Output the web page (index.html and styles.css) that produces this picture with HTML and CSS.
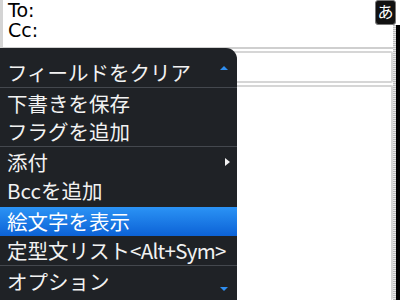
FILE: index.html
```html
<!DOCTYPE html>
<html>
<head>
<link rel="stylesheet" href="styles.css">
</head>
<body>

<div class="screen">
    <div class="main">
        <div class="header">
            <div class="addr">To:</div>
            <div class="addr">Cc:</div>
        </div>
        <div class="field subject"></div>
        <div class="field body"></div>
    </div>
    <div class="scrollbar"></div>

    <div class="ime">あ</div>

    <div class="menu">
        <div class="item">フィールドをクリア<span class="arrow-up"></span></div>
        <div class="sep"></div>
        <div class="item">下書きを保存</div>
        <div class="item">フラグを追加</div>
        <div class="sep"></div>
        <div class="item">添付<span class="arrow-right"></span></div>
        <div class="item">Bccを追加</div>
        <div class="item selected">絵文字を表示</div>
        <div class="item">定型文リスト<span class="key">&lt;Alt+Sym&gt;</span></div>
        <div class="sep"></div>
        <div class="item">オプション<span class="arrow-down"></span></div>
    </div>
</div>

</body>
</html>
```

FILE: styles.css
```css
html, body {
    margin: 0;
    padding: 0;
    background: #fff;
}

.screen {
    position: relative;
    width: 400px;
    height: 300px;
    overflow: hidden;
    display: flex;
    font-family: "Noto Sans CJK JP", "DejaVu Sans", sans-serif;
}

.main {
    flex: 1;
    display: flex;
    flex-direction: column;
}

.header {
    height: 47px;
    border-left: 3px solid #d4d4d4;
    border-bottom: 2px solid #cfcfcf;
    padding-left: 5px;
}

.addr {
    font-family: "DejaVu Sans", sans-serif;
    font-size: 19px;
    line-height: 20px;
    color: #000;
}

.field {
    border: 2px solid #d6d6d6;
    border-radius: 2px;
    margin-top: 2px;
    background: #fff;
}

.subject {
    height: 28px;
}

.body {
    flex: 1;
    border-bottom: none;
}

.scrollbar {
    width: 7px;
    background:
        linear-gradient(#000, #000) right 0 top 25px / 4px 100% no-repeat,
        repeating-linear-gradient(#bbb 0 1px, #e6e6e6 1px 2px) left 0 top 25px / 3px 100% no-repeat;
}

.ime {
    position: absolute;
    top: 0;
    right: 4px;
    width: 19px;
    height: 23px;
    background: #111;
    border: 1px solid #777;
    border-radius: 3px;
    color: #fff;
    font-size: 16px;
    line-height: 21px;
    text-align: center;
    box-shadow: inset 0 -3px 0 -1px #111, inset 0 -4px 0 -2px #ccc;
}

/* ポップアップメニュー */
.menu {
    position: absolute;
    left: 0;
    top: 48px;
    width: 237px;
    bottom: 0;
    background: #1f2226;
    border-top-right-radius: 11px;
    padding-top: 10px;
    color: #f2f2f2;
    font-size: 20.5px;
}

.item {
    position: relative;
    height: 28px;
    line-height: 28px;
    padding-left: 7px;
    white-space: nowrap;
}

.item.selected {
    height: 29px;
    background: linear-gradient(#2b93f5, #0c62d6);
    color: #fff;
    margin-top: 3px;
}

.key {
    letter-spacing: -0.7px;
}

.sep {
    height: 1px;
    background: #44484e;
    margin: 1px 0;
}

.arrow-up, .arrow-down, .arrow-right {
    position: absolute;
    width: 0;
    height: 0;
}

.arrow-up {
    right: 9px;
    top: 8px;
    border-left: 4px solid transparent;
    border-right: 4px solid transparent;
    border-bottom: 4px solid #2f8ef0;
}

.arrow-down {
    right: 9px;
    top: 20px;
    border-left: 4px solid transparent;
    border-right: 4px solid transparent;
    border-top: 4px solid #2f8ef0;
}

.arrow-right {
    right: 7px;
    top: 10px;
    border-top: 4px solid transparent;
    border-bottom: 4px solid transparent;
    border-left: 5px solid #f2f2f2;
}
```
